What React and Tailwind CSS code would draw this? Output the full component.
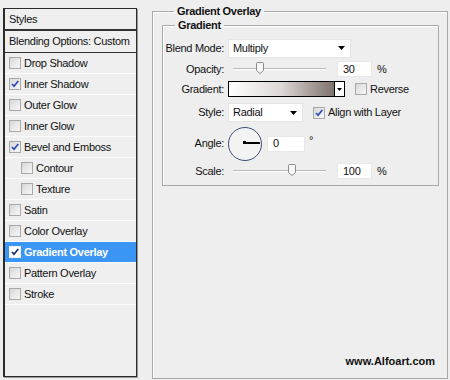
import React from "react";

const font = { fontFamily: '"Liberation Sans", Arial, sans-serif' };

function Box({ checked, inverse }) {
  return (
    <span
      className={
        "w-[12px] h-[12px] shrink-0 flex items-center justify-center border " +
        (inverse
          ? "border-[#f0f0f0] bg-white"
          : "border-[#a8a8a8] bg-gradient-to-br from-[#d8d8d8] to-[#f8f8f8]")
      }
    >
      {checked && (
        <svg width="10" height="10" viewBox="0 0 10 10">
          <path
            d="M2 5 L4 7.3 L8.3 2"
            fill="none"
            stroke={inverse ? "#1c2a6a" : "#2a49b8"}
            strokeWidth="1.7"
          />
        </svg>
      )}
    </span>
  );
}

function Arrow() {
  return (
    <svg width="7" height="4" viewBox="0 0 7 4">
      <path d="M0 0 H7 L3.5 4 Z" fill="#000" />
    </svg>
  );
}

function Thumb() {
  return (
    <svg width="8" height="12" viewBox="0 0 8 12">
      <path
        d="M0.5 1.5 Q0.5 0.5 1.5 0.5 H6.5 Q7.5 0.5 7.5 1.5 V8.5 L4 11.5 L0.5 8.5 Z"
        fill="#f7f7f7"
        stroke="#8a8a8a"
      />
    </svg>
  );
}

const items = [
  { label: "Drop Shadow" },
  { label: "Inner Shadow", checked: true },
  { label: "Outer Glow" },
  { label: "Inner Glow" },
  { label: "Bevel and Emboss", checked: true },
  { label: "Contour", indent: true },
  { label: "Texture", indent: true },
  { label: "Satin" },
  { label: "Color Overlay" },
  { label: "Gradient Overlay", checked: true, active: true },
  { label: "Pattern Overlay" },
  { label: "Stroke" },
];

function Label({ children }) {
  return <div className="w-[62px] shrink-0 text-right pr-[1px]">{children}</div>;
}

function Slider({ pos }) {
  return (
    <div className="w-[98px] shrink-0 h-[14px] pl-[5px] flex items-center">
      <div className="relative w-[93px] h-[2px] border-t border-[#b9b9b9] border-b border-b-white">
        <div className="absolute top-[-7px]" style={{ left: pos }}>
          <Thumb />
        </div>
      </div>
    </div>
  );
}

export default function App() {
  return (
    <div
      className="w-[450px] h-[380px] bg-[#eeeeee] text-[11px] text-[#111] flex overflow-hidden tracking-[-0.3px]"
      style={font}
    >
      {/* Left styles list */}
      <div className="mt-[8px] ml-[3px] w-[134px] h-[369px] shrink-0 border border-[#2b2b2b] border-l-2 bg-[#efefef] flex flex-col shadow-[1px_1px_0_#9a9a9a]">
        <div className="h-[22px] border-b-2 border-[#333] flex items-center pl-[4px]">Styles</div>
        <div className="h-[22px] border-b border-[#333] flex items-center pl-[4px]">
          Blending Options: Custom
        </div>
        {items.map((it) => (
          <div
            key={it.label}
            className={
              "h-[21px] border-b border-[#fbfbfb] flex items-center gap-[3px] " +
              (it.indent ? "pl-[16px] " : "pl-[4px] ") +
              (it.active ? "bg-[#3b95f4] text-white font-bold" : "")
            }
          >
            <Box checked={it.checked} inverse={it.active} />
            <span>{it.label}</span>
          </div>
        ))}
      </div>

      {/* Right panel */}
      <fieldset className="ml-[15px] mt-[5px] w-[296px] h-[374px] border border-[#a9a9a9] shadow-[inset_1px_1px_0_#fff] pl-[9px] pr-[8px] flex flex-col">
        <legend className="ml-[12px] px-[3px] font-bold leading-[13px]">Gradient Overlay</legend>
        <fieldset className="mt-[1px] w-[277px] border border-[#a9a9a9] shadow-[inset_1px_1px_0_#fff] pt-[5px] pb-[4px]">
          <legend className="ml-[12px] px-[3px] font-bold leading-[13px]">Gradient</legend>
          {/* Blend mode */}
          <div className="h-[22px] flex items-center gap-[3px]">
            <Label>Blend Mode:</Label>
            <div className="w-[123px] h-[19px] bg-white border border-[#e4e4e4] flex items-center justify-between pl-[4px] pr-[5px]">
              <span>Multiply</span>
              <Arrow />
            </div>
          </div>
          {/* Opacity */}
          <div className="h-[20px] flex items-center gap-[3px]">
            <Label>Opacity:</Label>
            <Slider pos={23} />
            <div className="ml-[8px] w-[35px] h-[16px] bg-white border border-[#e8e8e8] flex items-center pl-[5px]">30</div>
            <span className="ml-[2px]">%</span>
          </div>
          {/* Gradient */}
          <div className="h-[20px] flex items-center gap-[3px]">
            <Label>Gradient:</Label>
            <div className="w-[117px] h-[16px] border border-black flex">
              <div className="flex-1 bg-gradient-to-r from-white via-[#ddd8d6] to-[#7f736e]" />
              <div className="w-[10px] bg-white border-l border-black flex items-center justify-center">
                <svg width="5" height="3" viewBox="0 0 5 3">
                  <path d="M0 0 H5 L2.5 3 Z" fill="#000" />
                </svg>
              </div>
            </div>
            <div className="ml-[7px] flex items-center gap-[3px]">
              <Box />
              <span>Reverse</span>
            </div>
          </div>
          {/* Style */}
          <div className="h-[27px] flex items-center gap-[3px]">
            <Label>Style:</Label>
            <div className="w-[75px] h-[19px] bg-white border border-[#e4e4e4] flex items-center justify-between pl-[4px] pr-[5px]">
              <span>Radial</span>
              <Arrow />
            </div>
            <div className="ml-[7px] flex items-center gap-[3px]">
              <Box checked />
              <span>Align with Layer</span>
            </div>
          </div>
          {/* Angle */}
          <div className="h-[35px] flex items-center gap-[3px]">
            <Label>Angle:</Label>
            <div className="relative w-[34px] h-[34px] shrink-0 rounded-full border-[1.5px] border-[#3d4d78] bg-[#f3f3f3]">
              <div className="absolute left-[15px] top-[14.5px] w-[16px] h-[1.5px] bg-black" />
              <div className="absolute left-[13.5px] top-[13.5px] w-[3px] h-[3px] bg-black" />
            </div>
            <div className="ml-[2px] w-[38px] h-[16px] bg-white border border-[#e8e8e8] flex items-center pl-[5px]">0</div>
            <span className="ml-[1px] self-start mt-[9px] leading-[10px]">°</span>
          </div>
          {/* Scale */}
          <div className="h-[20px] flex items-center gap-[3px]">
            <Label>Scale:</Label>
            <Slider pos={55} />
            <div className="ml-[8px] w-[35px] h-[16px] bg-white border border-[#e8e8e8] flex items-center pl-[5px]">100</div>
            <span className="ml-[2px]">%</span>
          </div>
        </fieldset>
        <div className="flex-1" />
        <div className="text-right pr-[4px] pb-[9px] font-bold text-[11px] tracking-normal">www.Alfoart.com</div>
      </fieldset>
    </div>
  );
}
